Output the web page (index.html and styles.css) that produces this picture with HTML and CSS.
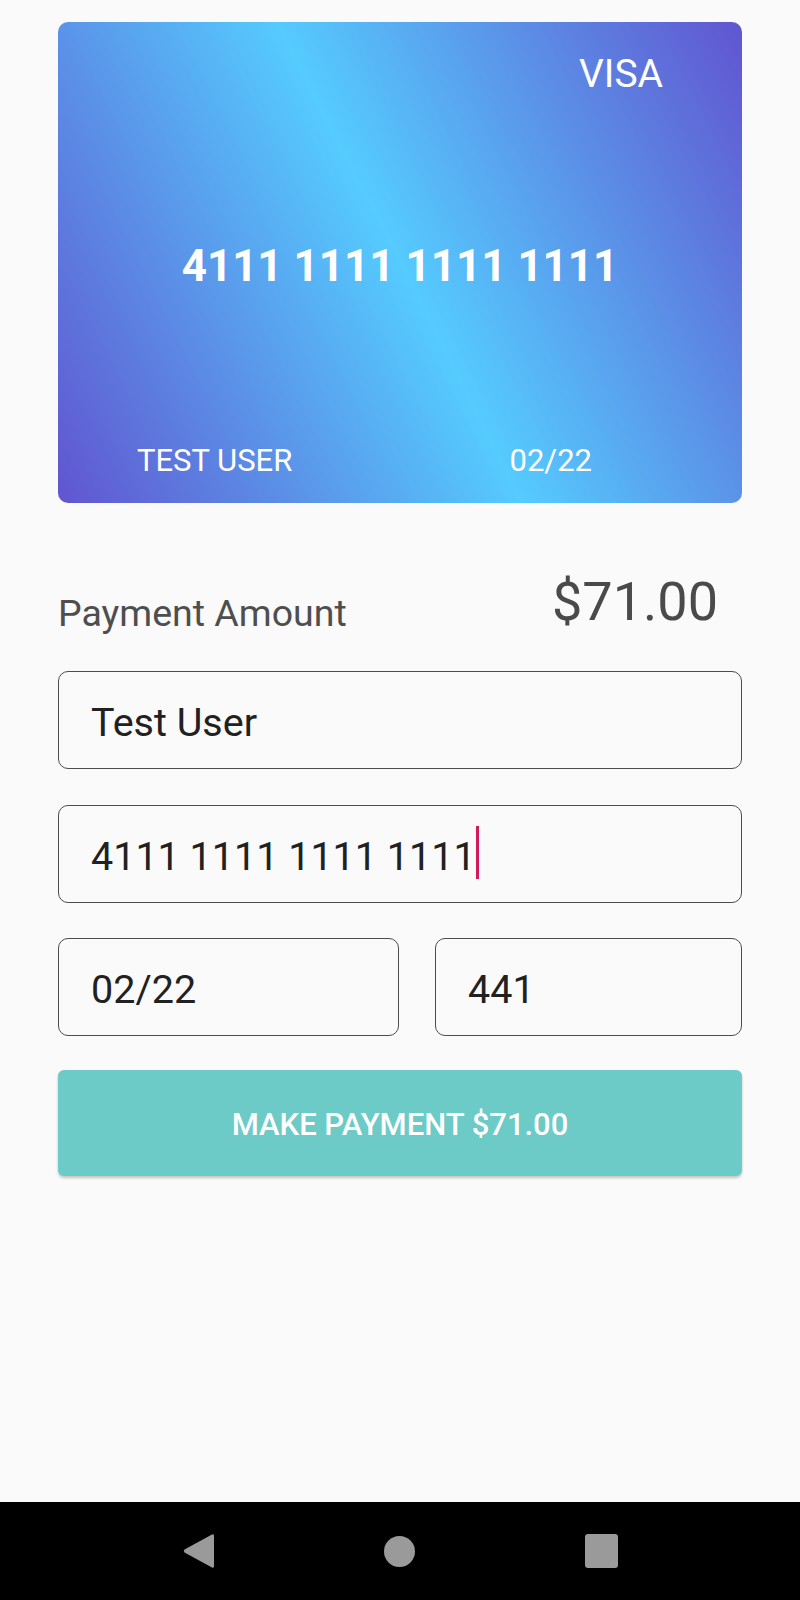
FILE: index.html
```html
<!DOCTYPE html>
<html lang="en">
<head>
<meta charset="utf-8">
<title>Payment</title>
<link rel="stylesheet" href="styles.css">
</head>
<body>
<div class="screen">
  <main class="content">
    <section class="card">
      <div class="card-brand">VISA</div>
      <div class="card-number">4111 1111 1111 1111</div>
      <div class="card-bottom">
        <span class="card-name">TEST USER</span>
        <span class="card-exp">02/22</span>
      </div>
    </section>

    <div class="amount-row">
      <span class="amount-label">Payment Amount</span>
      <span class="amount-value">$71.00</span>
    </div>

    <div class="field"><span class="field-text">Test User</span></div>
    <div class="field focused"><span class="field-text">4111 1111 1111 1111</span><span class="cursor"></span></div>
    <div class="field-row">
      <div class="field"><span class="field-text">02/22</span></div>
      <div class="field"><span class="field-text">441</span></div>
    </div>

    <button class="pay-btn">MAKE PAYMENT $71.00</button>
  </main>

  <nav class="navbar">
    <svg class="nav-icon" width="31" height="36" viewBox="0 0 31 36"><path d="M29 1.5 Q31 0.5 31 3 L31 33 Q31 35.5 29 34.5 L1.5 19.5 Q0 18 1.5 16.5 Z" fill="#9a9a9a"/></svg>
    <span class="nav-home"></span>
    <span class="nav-recent"></span>
  </nav>
</div>
</body>
</html>
```

FILE: styles.css
```css
* { box-sizing: border-box; }

html, body {
  margin: 0;
  padding: 0;
  background: #fafafa;
  font-family: Roboto, "Noto Sans", sans-serif;
}

.screen {
  min-height: 1600px;
  display: flex;
  flex-direction: column;
}

.content {
  flex: 1;
  padding: 22px 58px 0;
  display: flex;
  flex-direction: column;
}

.card {
  height: 481px;
  border-radius: 10px;
  padding: 33px 79px 0;
  color: #fff;
  background: linear-gradient(63deg, #6155d0 0%, #55cbfe 50%, #6155d0 100%);
  display: flex;
  flex-direction: column;
}

.card-brand {
  align-self: flex-end;
  font-size: 39px;
  line-height: 39px;
}

.card-number {
  margin-top: 150px;
  text-align: center;
  font-size: 44px;
  line-height: 44px;
  font-weight: 700;
}

.card-bottom {
  margin-top: 157px;
  display: flex;
  justify-content: space-between;
  font-size: 31px;
  line-height: 31px;
}

.card-exp { margin-right: 71px; }

.amount-row {
  margin-top: 72px;
  padding-right: 24px;
  display: flex;
  justify-content: space-between;
  align-items: flex-start;
}

.amount-label {
  margin-top: 20px;
  font-size: 37.5px;
  line-height: 37.5px;
  color: #4e4e4e;
}

.amount-value {
  font-size: 54px;
  line-height: 54px;
  color: #4a4a4a;
}

.field {
  margin-top: 38px;
  height: 98px;
  border: 1.6px solid #4c4c4c;
  border-radius: 10px;
  padding: 31px 32px 0;
  display: flex;
  align-items: flex-start;
  color: #212121;
}

.field.focused { margin-top: 36px; }

.field-text {
  font-size: 39.5px;
  line-height: 39.5px;
}

.cursor {
  width: 3.5px;
  height: 53px;
  margin-top: -11px;
  margin-left: 0;
  background: #d2195d;
}

.field-row {
  margin-top: 35px;
  display: grid;
  grid-template-columns: 341px 1fr;
  gap: 36px;
}

.field-row .field { margin-top: 0; }

.pay-btn {
  margin-top: 34px;
  height: 106px;
  width: 100%;
  border: none;
  border-radius: 6px;
  background: #6ccac7;
  box-shadow: 0 2px 3px rgba(0, 0, 0, 0.22);
  color: #fff;
  font-family: Roboto, "Noto Sans", sans-serif;
  font-weight: 500;
  font-size: 31px;
  padding: 3px 0 0;
}

.navbar {
  height: 98px;
  background: #000;
  display: flex;
  justify-content: center;
  align-items: center;
  gap: 170px;
}

.nav-icon { display: block; }

.nav-home {
  width: 31px;
  height: 31px;
  border-radius: 50%;
  background: #9a9a9a;
}

.nav-recent {
  width: 33px;
  height: 34px;
  border-radius: 3px;
  background: #9a9a9a;
}
```
